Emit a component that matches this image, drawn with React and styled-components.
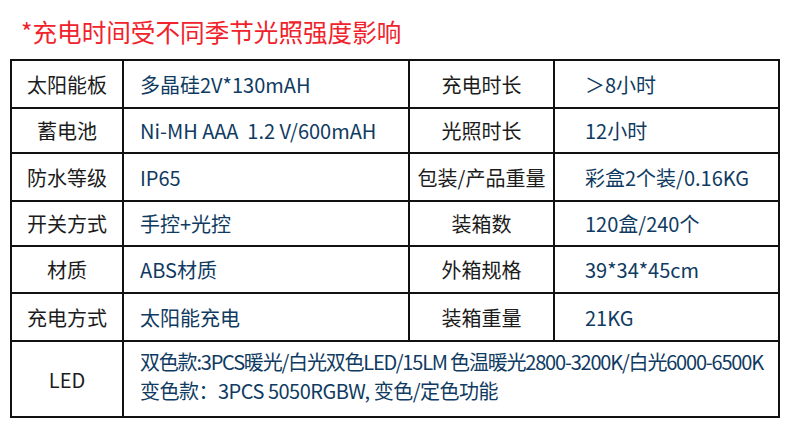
import React from "react";
import styled, { createGlobalStyle } from "styled-components";

const Global = createGlobalStyle`
  html, body { margin: 0; padding: 0; background: #ffffff; }
  body { font-family: "Noto Sans CJK SC", "Noto Sans", sans-serif; }
`;

const Page = styled.div`
  width: 790px;
  height: 435px;
  background: #fff;
  padding: 0 0 0 10px;
  box-sizing: border-box;
`;

const Title = styled.div`
  height: 59px;
  box-sizing: border-box;
  padding: 14px 0 0 11px;
  color: #f0222b;
  font-size: 24.6px;
  line-height: 34px;
  white-space: nowrap;
`;

const Table = styled.table`
  border-collapse: collapse;
  table-layout: fixed;
  width: 768px;
  border: 2px solid #111;
  font-size: 20px;
`;

const Row = styled.tr`
  height: ${(p) => p.$h}px;
`;

const Label = styled.td`
  border: 2px solid #111;
  color: #1c1c1c;
  text-align: center;
  padding: 0;
  white-space: nowrap;
`;

const Value = styled.td`
  border: 2px solid #111;
  color: #0f3b62;
  text-align: left;
  padding: 0 0 0 ${(p) => p.$pad}px;
  white-space: pre;
`;

const Lines = styled.div`
  display: flex;
  flex-direction: column;
  line-height: 29px;
  padding-bottom: 6px;
`;

const Line = styled.span`
  letter-spacing: ${(p) => p.$ls}px;
`;

const rows = [
  ["太阳能板", "多晶硅2V*130mAH", "充电时长", "＞8小时", 48],
  ["蓄电池", "Ni-MH AAA  1.2 V/600mAH", "光照时长", "12小时", 45],
  ["防水等级", "IP65", "包装/产品重量", "彩盒2个装/0.16KG", 48],
  ["开关方式", "手控+光控", "装箱数", "120盒/240个", 45],
  ["材质", "ABS材质", "外箱规格", "39*34*45cm", 47],
  ["充电方式", "太阳能充电", "装箱重量", "21KG", 48],
];

export default function App() {
  return (
    <>
      <Global />
      <Page>
        <Title>*充电时间受不同季节光照强度影响</Title>
        <Table>
          <colgroup>
            <col style={{ width: 112 }} />
            <col style={{ width: 286 }} />
            <col style={{ width: 145 }} />
            <col style={{ width: 225 }} />
          </colgroup>
          <tbody>
            {rows.map(([a, b, c, d, h]) => (
              <Row key={a} $h={h}>
                <Label>{a}</Label>
                <Value $pad={16}>{b}</Value>
                <Label>{c}</Label>
                <Value $pad={30}>{d}</Value>
              </Row>
            ))}
            <Row $h={76}>
              <Label>LED</Label>
              <Value $pad={16} colSpan={3}>
                <Lines>
                  <Line $ls={-1.2}>双色款:3PCS暖光/白光双色LED/15LM 色温暖光2800-3200K/白光6000-6500K</Line>
                  <Line $ls={-0.5}>变色款：3PCS 5050RGBW, 变色/定色功能</Line>
                </Lines>
              </Value>
            </Row>
          </tbody>
        </Table>
      </Page>
    </>
  );
}
